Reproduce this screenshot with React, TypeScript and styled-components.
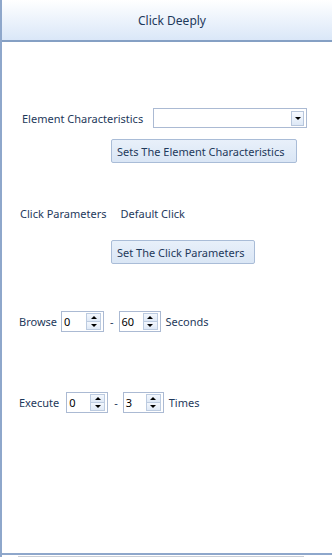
import React, {FC} from 'react';
import styled, {createGlobalStyle} from 'styled-components';

const GlobalStyle = createGlobalStyle`
  html, body {
    margin: 0;
    padding: 0;
    background: #ffffff;
  }
  #root {
    height: 557px;
  }
`;

const Frame = styled.div`
  display: flex;
  flex-direction: column;
  height: 557px;
  border-left: 2px solid #8ea7cb;
  box-sizing: border-box;
  font-family: 'Noto Sans', 'Open Sans', sans-serif;
  font-size: 11px;
  color: #1e395b;
  overflow: hidden;
`;

const Header = styled.div`
  height: 40px;
  flex: none;
  display: flex;
  align-items: center;
  justify-content: center;
  background: linear-gradient(to bottom, #ffffff 0%, #eef4fc 45%, #dae7f8 100%);
  border-bottom: 2px solid #85a0c4;
  padding-left: 10px;
  font-size: 12px;
`;

const Body = styled.div`
  flex: 1;
  padding-top: 66px;
`;

const Row = styled.div<{$left: number; $top: number; $height: number}>`
  display: flex;
  align-items: center;
  height: ${({$height}) => $height}px;
  margin-top: ${({$top}) => $top}px;
  padding-left: ${({$left}) => $left}px;
`;

const Label = styled.span<{$gap?: number; $lead?: number}>`
  white-space: nowrap;
  margin-right: ${({$gap}) => $gap ?? 0}px;
  margin-left: ${({$lead}) => $lead ?? 0}px;
`;

const Combo = styled.div`
  width: 154px;
  height: 20px;
  box-sizing: border-box;
  border: 1px solid #abbad3;
  background: #fff;
  display: flex;
  justify-content: flex-end;
  align-items: center;
  padding-right: 2px;
`;

const DropButton = styled.div`
  width: 13px;
  height: 15px;
  box-sizing: border-box;
  border: 1px solid #b7c6dc;
  background: linear-gradient(to bottom, #f7faff, #dde8f6);
  display: flex;
  align-items: center;
  justify-content: center;
`;

const Arrow = styled.span<{$up?: boolean}>`
  width: 0;
  height: 0;
  border-left: 3px solid transparent;
  border-right: 3px solid transparent;
  ${({$up}) => ($up ? 'border-bottom: 3px solid #000;' : 'border-top: 3px solid #000;')}
`;

const Button = styled.div<{$width: number}>`
  width: ${({$width}) => $width}px;
  height: 24px;
  box-sizing: border-box;
  border: 1px solid #a9bcd7;
  border-radius: 2px;
  background: linear-gradient(to bottom, #e8f0fa, #dae6f5);
  display: flex;
  align-items: center;
  padding-left: 5px;
  white-space: nowrap;
`;

const Spinner = styled.div<{$width: number}>`
  width: ${({$width}) => $width}px;
  height: 21px;
  box-sizing: border-box;
  border: 1px solid #abbad3;
  background: #fff;
  display: flex;
  align-items: center;
  padding: 1px;
`;

const SpinValue = styled.span`
  flex: 1;
  color: #000;
  padding-left: 1px;
`;

const SpinButtons = styled.div`
  display: flex;
  flex-direction: column;
  width: 15px;
  height: 17px;
  margin-right: 1px;
`;

const SpinHalf = styled.div`
  flex: 1;
  box-sizing: border-box;
  border: 1px solid #bccbe0;
  background: linear-gradient(to bottom, #f3f7fd, #dfe9f6);
  display: flex;
  align-items: center;
  justify-content: center;
  & + & {
    margin-top: -1px;
  }
`;

const Dash = styled.span`
  margin: 0 5px 0 6px;
`;

const Footer = styled.div`
  flex: none;
  height: 4px;
  border-top: 2px solid #8ea7cb;
  box-sizing: border-box;
  padding: 1px 28px 0 16px;
`;

const FooterBar = styled.div`
  height: 2px;
  background: #c9ced6;
`;

const NumberBox: FC<{value: string; width: number}> = ({value, width}) => (
  <Spinner $width={width}>
    <SpinValue>{value}</SpinValue>
    <SpinButtons>
      <SpinHalf>
        <Arrow $up />
      </SpinHalf>
      <SpinHalf>
        <Arrow />
      </SpinHalf>
    </SpinButtons>
  </Spinner>
);

const App: FC = () => (
  <>
    <GlobalStyle />
    <Frame>
      <Header>Click Deeply</Header>
      <Body>
        <Row $left={20} $top={0} $height={20}>
          <Label $gap={10}>Element Characteristics</Label>
          <Combo>
            <DropButton>
              <Arrow />
            </DropButton>
          </Combo>
        </Row>
        <Row $left={109} $top={11} $height={24}>
          <Button $width={186}>Sets The Element Characteristics</Button>
        </Row>
        <Row $left={18} $top={42} $height={16}>
          <Label $gap={14}>Click Parameters</Label>
          <Label>Default Click</Label>
        </Row>
        <Row $left={109} $top={19} $height={24}>
          <Button $width={144}>Set The Click Parameters</Button>
        </Row>
        <Row $left={17} $top={47} $height={21}>
          <Label $gap={4}>Browse</Label>
          <NumberBox value="0" width={43} />
          <Dash>-</Dash>
          <NumberBox value="60" width={42} />
          <Label $lead={5}>Seconds</Label>
        </Row>
        <Row $left={17} $top={60} $height={21}>
          <Label $gap={7}>Execute</Label>
          <NumberBox value="0" width={42} />
          <Dash>-</Dash>
          <NumberBox value="3" width={41} />
          <Label $lead={5}>Times</Label>
        </Row>
      </Body>
      <Footer>
        <FooterBar />
      </Footer>
    </Frame>
  </>
);

export default App;
